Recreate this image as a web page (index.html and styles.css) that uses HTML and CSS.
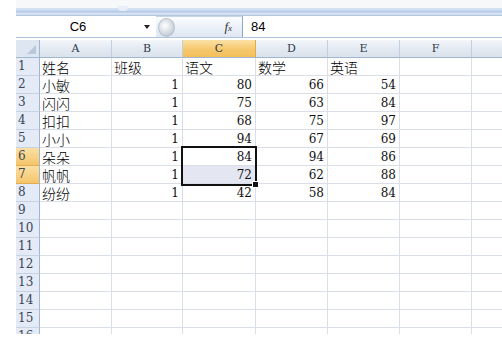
FILE: index.html
```html
<!DOCTYPE html>
<html lang="zh-CN">
<head>
  <meta charset="UTF-8">
  <title>成绩表</title>
  <link rel="stylesheet" href="styles.css">
</head>
<body>
  <div class="window">
    <div class="ribbon-edge"><span class="notch"></span></div>

    <div class="formula-bar">
      <div class="name-box">C6</div>
      <div class="name-arrow"></div>
      <div class="fx-area">
        <span class="knob"></span>
        <span class="fx">f<small>x</small></span>
      </div>
      <div class="formula-input">84</div>
    </div>

    <div class="sheet">
      <div class="row head">
        <div class="corner"><span class="corner-mark"></span></div>
        <div>A</div><div>B</div><div class="on">C</div><div>D</div><div>E</div><div>F</div><div></div>
      </div>
      <div class="row">
        <div class="rh">1</div>
        <div class="t">姓名</div><div class="t">班级</div><div class="t">语文</div><div class="t">数学</div><div class="t">英语</div><div></div><div></div>
      </div>
      <div class="row">
        <div class="rh">2</div>
        <div class="t">小敏</div><div class="n">1</div><div class="n">80</div><div class="n">66</div><div class="n">54</div><div></div><div></div>
      </div>
      <div class="row">
        <div class="rh">3</div>
        <div class="t">闪闪</div><div class="n">1</div><div class="n">75</div><div class="n">63</div><div class="n">84</div><div></div><div></div>
      </div>
      <div class="row">
        <div class="rh">4</div>
        <div class="t">扣扣</div><div class="n">1</div><div class="n">68</div><div class="n">75</div><div class="n">97</div><div></div><div></div>
      </div>
      <div class="row">
        <div class="rh">5</div>
        <div class="t">小小</div><div class="n">1</div><div class="n">94</div><div class="n">67</div><div class="n">69</div><div></div><div></div>
      </div>
      <div class="row">
        <div class="rh on">6</div>
        <div class="t">朵朵</div><div class="n">1</div><div class="n">84</div><div class="n">94</div><div class="n">86</div><div></div><div></div>
      </div>
      <div class="row">
        <div class="rh on">7</div>
        <div class="t">帆帆</div><div class="n">1</div><div class="n picked">72</div><div class="n">62</div><div class="n">88</div><div></div><div></div>
      </div>
      <div class="row">
        <div class="rh">8</div>
        <div class="t">纷纷</div><div class="n">1</div><div class="n">42</div><div class="n">58</div><div class="n">84</div><div></div><div></div>
      </div>
      <div class="row"><div class="rh">9</div><div></div><div></div><div></div><div></div><div></div><div></div><div></div></div>
      <div class="row"><div class="rh">10</div><div></div><div></div><div></div><div></div><div></div><div></div><div></div></div>
      <div class="row"><div class="rh">11</div><div></div><div></div><div></div><div></div><div></div><div></div><div></div></div>
      <div class="row"><div class="rh">12</div><div></div><div></div><div></div><div></div><div></div><div></div><div></div></div>
      <div class="row"><div class="rh">13</div><div></div><div></div><div></div><div></div><div></div><div></div><div></div></div>
      <div class="row"><div class="rh">14</div><div></div><div></div><div></div><div></div><div></div><div></div><div></div></div>
      <div class="row"><div class="rh">15</div><div></div><div></div><div></div><div></div><div></div><div></div><div></div></div>
      <div class="row"><div class="rh">16</div><div></div><div></div><div></div><div></div><div></div><div></div><div></div></div>

      <!-- selected range C6:C7 -->
      <div class="selection"><span class="handle"></span></div>
    </div>
  </div>
</body>
</html>
```

FILE: styles.css
```css
body {
  margin: 0;
  background: #fff;
  font-family: 'Liberation Sans', Arial, sans-serif;
  color: #000;
}

.window {
  margin-left: 16px;
  width: 486px;
  overflow: hidden;
}

/* bottom edge of the ribbon */
.ribbon-edge {
  position: relative;
  height: 16px;
  background: linear-gradient(#f7f8fa 0, #f7f8fa 8px, #d6e3f3 8px, #c5d7ee 11px, #a8c0de 12px, #dce7f5 13px, #c9d9ed 15px, #9fb7d5 16px);
}

.notch {
  position: absolute;
  left: 102px;
  top: 6px;
  width: 10px;
  height: 5px;
  background: #e9eff8;
  border-radius: 0 0 4px 4px;
}

.formula-bar {
  display: flex;
  height: 21px;
  border-bottom: 1px solid #aec3dd;
  background: #fff;
}

.name-box {
  width: 124px;
  font-size: 13px;
  line-height: 21px;
  text-align: center;
}

.name-arrow {
  width: 0;
  height: 0;
  margin: 9px 6px 0 4px;
  border-left: 3px solid transparent;
  border-right: 3px solid transparent;
  border-top: 4px solid #222;
}

.fx-area {
  position: relative;
  width: 86px;
  background: linear-gradient(#fbfcfe, #e9eff7 60%, #dfe7f2);
  border-right: 1px solid #8da7c7;
  border-top: 1px solid #c6d5e8;
}

.knob {
  position: absolute;
  left: 2px;
  top: 1px;
  width: 15px;
  height: 17px;
  border-radius: 50%;
  background: radial-gradient(circle at 40% 40%, #fff, #cfd6df 60%, #a6afba);
  border: 1px solid #b9c3cf;
}

.fx {
  position: absolute;
  right: 10px;
  top: 2px;
  font-family: 'Liberation Serif', serif;
  font-style: italic;
  font-size: 13px;
  color: #333;
}

.fx small {
  font-size: 9px;
}

.formula-input {
  flex: 1;
  padding-left: 8px;
  font-size: 13px;
  line-height: 21px;
}

/* worksheet grid */
.sheet {
  position: relative;
  margin-top: 2px;
  height: 294px;
  overflow: hidden;
  background: #e6ecf5;
}

.row {
  display: grid;
  grid-template-columns: 24px 72px 71px 73px 72px 72px 72px 60px;
  height: 18px;
  background: #fff;
}

.row > div {
  box-sizing: border-box;
  border-right: 1px solid #d9dee7;
  border-bottom: 1px solid #d9dee7;
  padding: 0 3px;
  line-height: 17px;
  white-space: nowrap;
  overflow: hidden;
}

.row.head > div {
  background: linear-gradient(#f3f6fa, #e3e9f1 55%, #dae2ec);
  border-right: 1px solid #c2cfde;
  border-bottom: 1px solid #9eb6ce;
  text-align: center;
  font-family: 'DejaVu Serif', serif;
  font-size: 11px;
  color: #2c3a4a;
}

.row.head > div.on {
  background: linear-gradient(#fbe1a6, #f6c86c 55%, #f3bf5c);
  border-right-color: #e2a944;
}

.row.head > .corner {
  position: relative;
  background: #dde6f1;
  border-right-color: #9eb6ce;
}

.corner-mark {
  position: absolute;
  right: 3px;
  bottom: 3px;
  width: 0;
  height: 0;
  border-left: 9px solid transparent;
  border-bottom: 9px solid #b8c7da;
}

.rh {
  background: #e4ebf6;
  border-right-color: #9eb6ce !important;
  border-bottom-color: #c6d3e3 !important;
  font-family: 'DejaVu Serif', serif;
  font-size: 12px;
  color: #3a4656;
  padding-left: 2px !important;
}

.rh.on {
  background: linear-gradient(#fbe0a4, #f4c56a);
  border-bottom-color: #e2ad52 !important;
}

.t {
  font-family: 'Noto Sans CJK SC', sans-serif;
  font-weight: 300;
  font-size: 14px;
  line-height: 18px !important;
  padding-left: 2px !important;
}

.n {
  text-align: right;
  font-family: 'DejaVu Serif', serif;
  font-size: 12px;
  line-height: 18px !important;
  color: #111;
}

.n.picked {
  background: #e4e7f2;
}

.selection {
  position: absolute;
  left: 165px;
  top: 106px;
  width: 76px;
  height: 40px;
  box-sizing: border-box;
  border: 2px solid #111;
}

.handle {
  position: absolute;
  right: -4px;
  bottom: -4px;
  width: 5px;
  height: 5px;
  background: #111;
  border: 1px solid #fff;
}
```
